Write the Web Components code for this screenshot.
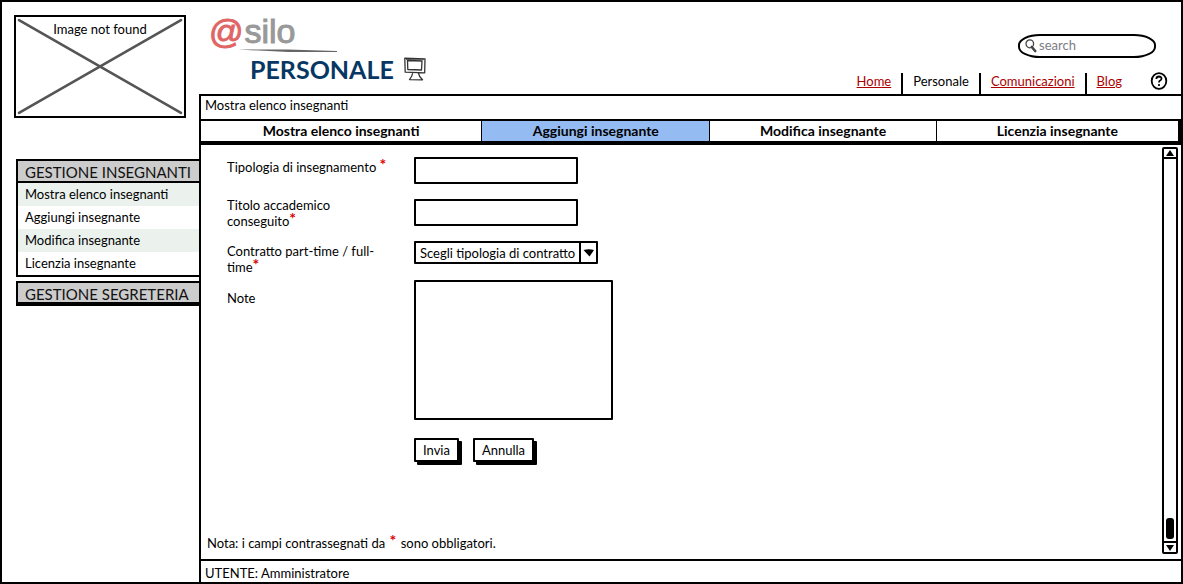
<!DOCTYPE html>
<html lang="it">
<head>
<meta charset="utf-8">
<meta name="viewport" content="width=device-width, initial-scale=1">
<title>@silo - Personale</title>
<style>
html, body { margin: 0; background: #fff; }
body { font: 13px/16px Lato, "Liberation Sans", sans-serif; color: #000; }
</style>
</head>
<body>
<asilo-app></asilo-app>
<script>
function define(name, html, setup) {
  customElements.define(name, class extends HTMLElement {
    constructor() {
      super();
      this.attachShadow({ mode: 'open' }).innerHTML = '<style>*{box-sizing:border-box}</style>' + html;
    }
    connectedCallback() { if (setup) setup(this, this.shadowRoot); }
  });
}

define('image-placeholder', `
<style>
:host { display: grid; height: 103px; border: 2px solid #000; }
svg, span { grid-area: 1 / 1; }
svg { width: 100%; height: 99px; }
span { text-align: center; padding-top: 4px; }
</style>
<svg viewBox="0 0 168 98" preserveAspectRatio="none" aria-hidden="true"><path d="M3 3 165 95M165 3 3 95" stroke="#555" stroke-width="2.6" stroke-linecap="round"/></svg>
<span><slot></slot></span>`);

define('menu-section', `
<style>
:host { display: block; }
h2 { margin: 0; height: 24px; padding: 2px 7px 0; border: 2px solid #000; border-right: 0; background: #ccc; font-size: 15px; line-height: 18px; font-weight: 400; color: #111; white-space: nowrap; }
:host([closed]) h2 { height: 25px; border-bottom-width: 4px; }
ul { margin: 0; padding: 0; list-style: none; border: solid #000; border-width: 0 0 2px 2px; }
:host([closed]) ul { display: none; }
</style>
<h2></h2><ul><slot></slot></ul>`, (el, root) => { root.querySelector('h2').textContent = el.getAttribute('heading'); });

define('menu-entry', `
<style>
:host { display: block; }
:host(:nth-of-type(odd)) { background: #ebf2ee; }
li { display: block; }
a { display: block; padding: 0 7px; line-height: 23px; color: #000; text-decoration: none; }
</style>
<li><a href="#"><slot></slot></a></li>`);

define('side-bar', `
<style>
:host { display: block; padding: 13px 0 0 12px; }
image-placeholder { margin: 0 13px 41px 0; }
nav { display: grid; gap: 4px; padding-left: 2px; }
</style>
<image-placeholder>Image not found</image-placeholder>
<nav>
<menu-section heading="GESTIONE INSEGNANTI">
<menu-entry>Mostra elenco insegnanti</menu-entry>
<menu-entry>Aggiungi insegnante</menu-entry>
<menu-entry>Modifica insegnante</menu-entry>
<menu-entry>Licenzia insegnante</menu-entry>
</menu-section>
<menu-section heading="GESTIONE SEGRETERIA" closed></menu-section>
</nav>`);

define('brand-logo', `
<style>
:host { display: block; padding: 10px 0 0 10px; }
.name { display: flex; align-items: flex-start; gap: 1px; font: 34px/38px "Liberation Sans", Arial, sans-serif; color: #999; -webkit-text-stroke: 1px currentColor; }
.name b { font-weight: 400; color: #e06666; }
.rule { display: block; margin: -1px 0 0 29px; }
h1 { display: flex; align-items: center; gap: 10px; margin: 0 0 0 41px; font-size: 25px; line-height: 32px; font-weight: 700; color: #073763; }
</style>
<div class="name"><b>@</b><span>silo</span></div>
<svg class="rule" width="100" height="4" aria-hidden="true"><path d="M0 .5 50 .5 99 2 99 3 50 3Z" fill="#666"/></svg>
<h1>PERSONALE
<svg width="22" height="24" viewBox="0 0 22 24" fill="none" stroke="#333" stroke-width="1.3" stroke-linejoin="round" aria-hidden="true"><path d="M.8 1.2 21 1.8 20.7 15.8 1.2 15.2ZM3.5 3.5 18 4 17.5 13 3.8 12.5ZM8.8 15.5Q8.5 19 5.5 22.6L18.5 22.8Q15 19.5 14.3 15.8"/><path d="M2 2.5 20 2.7" stroke-width=".8"/></svg></h1>`);

define('search-box', `
<style>
:host { display: flex; align-items: center; gap: 2px; width: 138px; height: 24px; padding: 0 5px; border: 2px solid #000; border-radius: 22px / 11px; }
svg { flex: none; }
input { flex: 1; min-width: 0; padding: 0 0 2px; border: 0; background: none; outline: 0; font: inherit; color: #000; }
input::placeholder { color: #7c7c85; opacity: 1; }
</style>
<svg width="12" height="14" viewBox="0 0 12 14" fill="none" aria-hidden="true"><ellipse cx="4.8" cy="4.8" rx="3.8" ry="4" stroke="#444" stroke-width="1.3"/><path d="M6.8 8 10.2 12" stroke="#444" stroke-width="2.6" stroke-linecap="round"/></svg>
<input type="search" placeholder="search" aria-label="search">`);

define('top-links', `
<style>
:host { display: flex; align-items: flex-end; }
nav { display: flex; }
a { padding: 0 10px; line-height: 17px; height: 21px; color: #a00; }
a + a { border-left: 2px solid #000; }
a[aria-current] { color: #000; text-decoration: none; }
button { margin: 0 13px 4px 18px; padding: 0; border: 0; background: none; display: grid; place-items: center; width: 18px; height: 18px; }
</style>
<nav><a href="#">Home</a><a href="#" aria-current="page">Personale</a><a href="#">Comunicazioni</a><a href="#">Blog</a></nav>
<button type="button" aria-label="Aiuto"><svg width="18" height="18" viewBox="0 0 18 18" fill="none" stroke="#000"><ellipse cx="9" cy="9" rx="7.3" ry="7.8" stroke-width="1.8"/><path d="M6.3 7Q6.5 4.5 9 4.5 11.6 4.6 11.5 6.8 11.4 8 9.8 8.8 9 9.3 9 10.5" stroke-width="1.8"/><circle cx="9" cy="13" r=".7" fill="#000"/></svg></button>`);

define('page-header', `
<style>
:host { display: flex; justify-content: space-between; height: 92px; }
.tools { display: flex; flex-direction: column; align-items: flex-end; justify-content: space-between; padding-top: 32px; }
search-box { margin-right: 25px; }
</style>
<brand-logo></brand-logo>
<div class="tools"><search-box></search-box><top-links></top-links></div>`);

define('tab-bar', `
<style>
:host { display: grid; grid-template-columns: 281fr 229fr 227fr 243fr; height: 26px; border: solid #000; border-width: 2px 3px 4px 0; }
</style><slot></slot>`);

define('tab-button', `
<style>
:host { display: block; }
:host(:not(:first-of-type)) { border-left: 1px solid #000; }
button { display: block; width: 100%; height: 20px; padding: 0; border: 0; background: #fff; font: 700 14px/20px Lato, "Liberation Sans", sans-serif; color: #000; }
:host([selected]) button { background: #94bbf2; }
</style><button type="button"><slot></slot></button>`);

define('required-mark', `<style>:host { display: inline; color: #d00; font-weight: 700; font-size: 16px; line-height: 1px; vertical-align: 2px; }</style>*`);

define('form-field', `
<style>
:host { display: grid; grid-template-columns: 148px auto; column-gap: 39px; justify-content: start; align-items: start; }
label { padding-top: 2px; }
:host([kind=area]) label { padding-top: 10px; }
:host([wrapped]) label { padding-top: 0; }
:host([wrapped]) input { margin-top: 2px; }
input, select, textarea { display: block; margin: 0; border: 2px solid #000; border-radius: 1px; background: #fff; font: inherit; color: #000; outline: 0; }
input { width: 164px; height: 27px; padding: 2px 6px; }
textarea { width: 199px; height: 140px; padding: 4px; resize: none; }
.pick { display: grid; width: 184px; height: 23px; }
.pick > * { grid-area: 1 / 1; }
select { appearance: none; padding: 0 18px 0 4px; width: 100%; height: 100%; }
.arrow { justify-self: end; width: 19px; height: 23px; pointer-events: none; }
</style>
<label for="control"><slot></slot></label><div id="box"></div>`, (el, root) => {
  const kinds = {
    text: '<input id="control" type="text">',
    area: '<textarea id="control"></textarea>',
    select: '<div class="pick"><select id="control"><option>Scegli tipologia di contratto</option><option>Part-time</option><option>Full-time</option></select><svg class="arrow" viewBox="0 0 19 23" aria-hidden="true"><path d="M1 2V21" stroke="#000" stroke-width="2"/><path d="M4.5 9Q10 7.5 15 9L10.5 15.5Z"/></svg></div>'
  };
  root.querySelector('#box').innerHTML = kinds[el.getAttribute('kind')];
});

define('sketch-button', `
<style>
:host { display: block; }
button { display: block; height: 24px; padding: 0 7px; border: 2px solid #000; border-radius: 1px; background: #fff; box-shadow: 3px 3px 0 #000; font: inherit; color: #000; }
</style><button type="button"><slot></slot></button>`);

define('teacher-form', `
<style>
:host { display: block; padding: 12px 0 0 26px; }
form { display: grid; grid-template-rows: 40px 44px 39px auto auto; }
.actions { display: flex; gap: 14px; padding: 18px 0 0 187px; }
.line { white-space: nowrap; }
</style>
<form>
<form-field kind="text"><span class="line">Tipologia di insegnamento <required-mark></required-mark></span></form-field>
<form-field kind="text" wrapped>Titolo accademico conseguito<required-mark></required-mark></form-field>
<form-field kind="select">Contratto part-time / full-time<required-mark></required-mark></form-field>
<form-field kind="area">Note</form-field>
<div class="actions"><sketch-button>Invia</sketch-button><sketch-button>Annulla</sketch-button></div>
</form>`);

define('scroll-track', `
<style>
:host { display: flex; flex-direction: column; width: 16px; border: 2px solid #000; border-radius: 2px; align-items: center; }
svg { flex: none; }
.run { flex: 1; align-self: stretch; display: flex; align-items: flex-end; justify-content: center; padding-bottom: 2px; border: solid #000; border-width: 2px 0; }
i { width: 8px; height: 21px; border-radius: 3px; background: #000; }
</style>
<svg width="12" height="8" viewBox="0 0 12 8" aria-hidden="true"><path d="M2 7 6 1 10 7Z"/></svg>
<div class="run"><i></i></div>
<svg width="12" height="9" viewBox="0 0 12 9" aria-hidden="true"><path d="M2 2 10 2 6 8Z"/></svg>`);

define('asilo-app', `
<style>
:host { display: grid; grid-template-columns: 197px minmax(0, 1fr); min-height: 100vh; border: 2px solid #000; box-sizing: border-box; }
.right { display: flex; flex-direction: column; }
.panel { flex: 1; display: flex; flex-direction: column; border: solid #000; border-width: 2px 0 0 2px; }
.crumb { height: 23px; padding: 1px 4px; }
.body { flex: 1; display: flex; justify-content: space-between; }
main { display: flex; flex-direction: column; justify-content: space-between; gap: 24px; }
p { margin: 0 0 8px 6px; }
scroll-track { margin: 2px 3px 5px 0; }
footer { height: 23px; padding: 4px 4px 0; border-top: 2px solid #000; }
p required-mark { padding: 0 1px; }
</style>
<side-bar></side-bar>
<div class="right">
<page-header></page-header>
<div class="panel">
<div class="crumb">Mostra elenco insegnanti</div>
<tab-bar><tab-button>Mostra elenco insegnanti</tab-button><tab-button selected>Aggiungi insegnante</tab-button><tab-button>Modifica insegnante</tab-button><tab-button>Licenzia insegnante</tab-button></tab-bar>
<div class="body">
<main><teacher-form></teacher-form><p>Nota: i campi contrassegnati da <required-mark></required-mark> sono obbligatori.</p></main>
<scroll-track></scroll-track>
</div>
<footer>UTENTE: Amministratore</footer>
</div>
</div>`);
</script>
</body>
</html>
